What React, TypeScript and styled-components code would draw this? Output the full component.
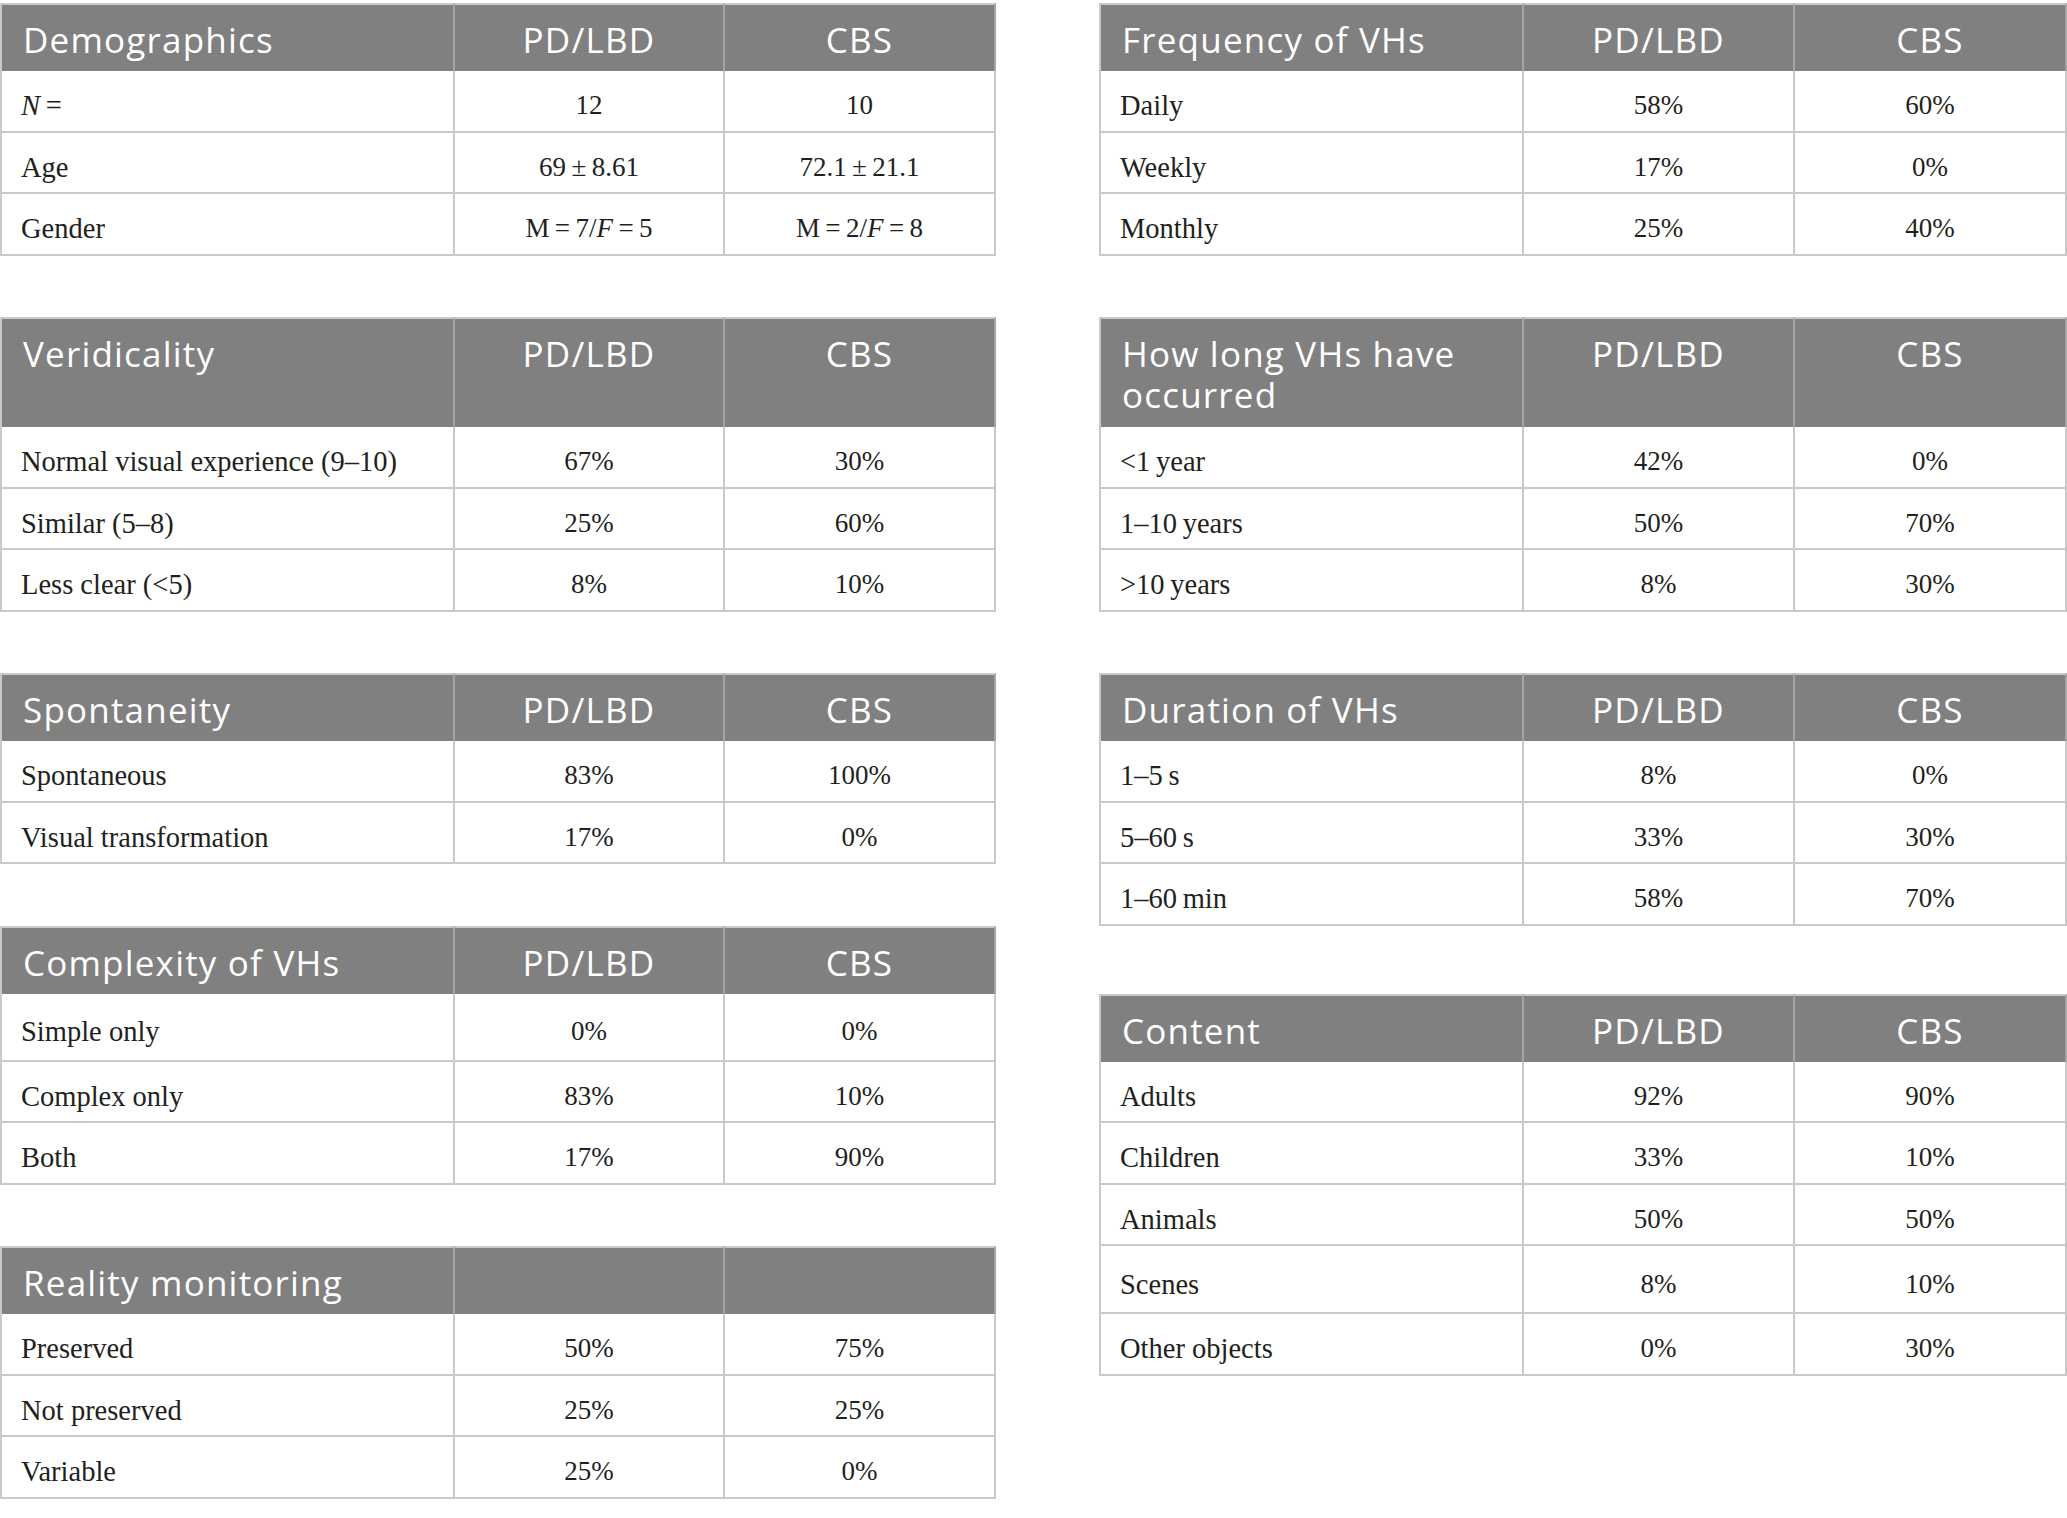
import React from "react";
import styled, { createGlobalStyle } from "styled-components";

const GlobalStyle = createGlobalStyle`
  html, body {
    margin: 0;
    padding: 0;
    background: #ffffff;
  }
  body {
    overflow: hidden;
  }
`;

const Page = styled.div`
  padding-top: 3px;
`;

const Sheet = styled.table`
  width: 2067px;
  table-layout: fixed;
  border-collapse: separate;
  border-spacing: 0;
`;

const Col = styled.col<{ $width: number }>`
  width: ${({ $width }) => `${$width}px`};
`;

const Row = styled.tr<{ $height: number }>`
  height: ${({ $height }) => `${$height}px`};
`;

const HeadCell = styled.th<{ $first?: boolean }>`
  background: #808080;
  color: #ffffff;
  font-family: "Open Sans", "Noto Sans", sans-serif;
  font-weight: 400;
  font-size: 35px;
  line-height: 41px;
  letter-spacing: 1.2px;
  text-align: ${({ $first }) => ($first ? "left" : "center")};
  vertical-align: top;
  padding: 14px 21px 0;
  border-top: 2px solid #c9c9c9;
  border-right: 2px solid #a4a4a4;
  border-left: ${({ $first }) => ($first ? "2px solid #c9c9c9" : "0")};
`;

const BodyCell = styled.td<{ $first?: boolean }>`
  font-family: "Liberation Serif", "Times New Roman", serif;
  font-size: ${({ $first }) => ($first ? "28.5px" : "27px")};
  line-height: 31px;
  color: #231f20;
  text-align: ${({ $first }) => ($first ? "left" : "center")};
  vertical-align: middle;
  white-space: nowrap;
  padding: 10px 19px 0;
  border-bottom: 2px solid #c9c9c9;
  border-right: 2px solid #c9c9c9;
  border-left: ${({ $first }) => ($first ? "2px solid #c9c9c9" : "0")};
`;

const BlankCell = styled.td`
  padding: 0;
`;

const Ital = styled.i`
  font-style: italic;
`;

const T = "\u2009";

type Line = { kind: "head" | "body"; cells: React.ReactNode[]; tall?: boolean } | null;

const head = (title: string, a = "PD/LBD", b = "CBS", tall = false): Line => ({
  kind: "head",
  cells: [title, a, b],
  tall
});
const body = (...cells: React.ReactNode[]): Line => ({ kind: "body", cells });

const columns = [455, 270, 271, 103, 425, 271, 272];

const grid: [Line, Line][] = [
  [head("Demographics"), head("Frequency of VHs")],
  [
    body(<><Ital>N</Ital>{T}=</>, "12", "10"),
    body("Daily", "58%", "60%")
  ],
  [body("Age", `69${T}±${T}8.61`, `72.1${T}±${T}21.1`), body("Weekly", "17%", "0%")],
  [
    body(
      "Gender",
      <>M{T}={T}7/<Ital>F</Ital>{T}={T}5</>,
      <>M{T}={T}2/<Ital>F</Ital>{T}={T}8</>
    ),
    body("Monthly", "25%", "40%")
  ],
  [null, null],
  [head("Veridicality"), head("How long VHs have occurred", "PD/LBD", "CBS", true)],
  [body("Normal visual experience (9–10)", "67%", "30%"), body(`<1${T}year`, "42%", "0%")],
  [body("Similar (5–8)", "25%", "60%"), body(`1–10${T}years`, "50%", "70%")],
  [body("Less clear (<5)", "8%", "10%"), body(`>10${T}years`, "8%", "30%")],
  [null, null],
  [head("Spontaneity"), head("Duration of VHs")],
  [body("Spontaneous", "83%", "100%"), body(`1–5${T}s`, "8%", "0%")],
  [body("Visual transformation", "17%", "0%"), body(`5–60${T}s`, "33%", "30%")],
  [null, body(`1–60${T}min`, "58%", "70%")],
  [head("Complexity of VHs"), null],
  [body("Simple only", "0%", "0%"), head("Content")],
  [body("Complex only", "83%", "10%"), body("Adults", "92%", "90%")],
  [body("Both", "17%", "90%"), body("Children", "33%", "10%")],
  [null, body("Animals", "50%", "50%")],
  [head("Reality monitoring", "", ""), body("Scenes", "8%", "10%")],
  [body("Preserved", "50%", "75%"), body("Other objects", "0%", "30%")],
  [body("Not preserved", "25%", "25%"), null],
  [body("Variable", "25%", "0%"), null]
];

const rowHeight = (left: Line, right: Line) => {
  const lines = [left, right];
  if (lines.some(l => l && l.kind === "head" && l.tall)) return 110;
  if (lines.some(l => l && l.kind === "head")) return 68;
  return 61.5;
};

const Section = ({ line }: { line: Line }) => {
  if (!line) {
    return (
      <>
        <BlankCell />
        <BlankCell />
        <BlankCell />
      </>
    );
  }
  if (line.kind === "head") {
    return (
      <>
        {line.cells.map((c, i) => (
          <HeadCell key={i} $first={i === 0}>
            {c}
          </HeadCell>
        ))}
      </>
    );
  }
  return (
    <>
      {line.cells.map((c, i) => (
        <BodyCell key={i} $first={i === 0}>
          {c}
        </BodyCell>
      ))}
    </>
  );
};

export default function App() {
  return (
    <Page>
      <GlobalStyle />
      <Sheet>
        <colgroup>
          {columns.map((w, i) => (
            <Col key={i} $width={w} />
          ))}
        </colgroup>
        <tbody>
          {grid.map(([left, right], i) => (
            <Row key={i} $height={rowHeight(left, right)}>
              <Section line={left} />
              <BlankCell />
              <Section line={right} />
            </Row>
          ))}
        </tbody>
      </Sheet>
    </Page>
  );
}
